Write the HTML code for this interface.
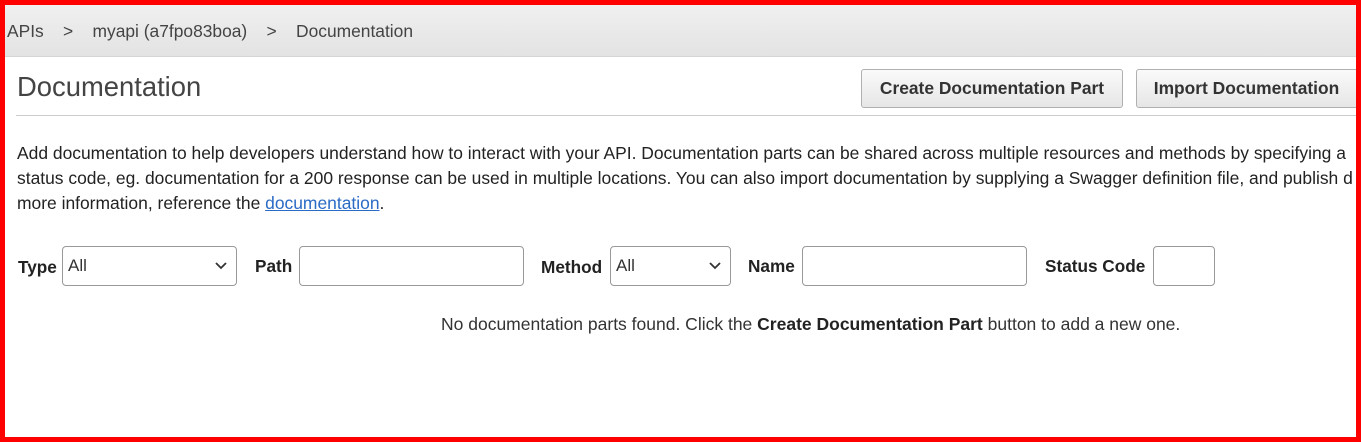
<!DOCTYPE html>
<html><head><style>
*{box-sizing:border-box;margin:0;padding:0}
body{width:1361px;height:442px;overflow:hidden;background:#fff;font-family:"Liberation Sans",Arial,sans-serif;color:#333;position:relative}
.a{position:absolute;white-space:nowrap}
.frame{position:absolute;left:0;top:0;width:1361px;height:442px;border:5px solid #f00;z-index:10;pointer-events:none}
.bc{position:absolute;left:0;top:0;width:1361px;height:57px;background:linear-gradient(#f1f1f1,#e3e3e3);border-bottom:1px solid #d5d5d5}
.btn{position:absolute;height:39px;border:1px solid #b0b0b0;border-radius:3px;background:linear-gradient(#fafafa,#e6e6e6);font-weight:bold;font-size:17.4px;color:#333;text-align:center;line-height:37px}
.box{position:absolute;height:40px;border:1px solid #999;border-radius:4px;background:#fff;font-size:17px;line-height:38px;padding-left:5px}
.lbl{position:absolute;font-weight:bold;font-size:17.2px;color:#222}
.chev{position:absolute;right:9px;top:15px}
</style></head><body>
<div class="bc"></div>
<div class="a" style="left:7px;top:21px;font-size:17.4px;color:#444">APIs&nbsp;&nbsp;&nbsp;&nbsp;&gt;&nbsp;&nbsp;&nbsp;&nbsp;myapi (a7fpo83boa)&nbsp;&nbsp;&nbsp;&nbsp;&gt;&nbsp;&nbsp;&nbsp;&nbsp;Documentation</div>
<div class="a" style="left:17px;top:71px;font-size:27.4px;color:#444">Documentation</div>
<div class="btn" style="left:861px;top:69px;width:262px">Create Documentation Part</div>
<div class="btn" style="left:1136px;top:69px;width:225px;padding-right:4px">Import Documentation</div>
<div class="a" style="left:16px;top:115px;width:1345px;height:1px;background:#ccc"></div>
<div class="a" style="left:17px;top:141px;font-size:17.45px;line-height:25px;color:#222">Add documentation to help developers understand how to interact with your API. Documentation parts can be shared across multiple resources and methods by specifying a<br>status code, eg. documentation for a 200 response can be used in multiple locations. You can also import documentation by supplying a Swagger definition file, and publish d<br>more information, reference the <span style="color:#2a6bc5;text-decoration:underline">documentation</span>.</div>
<div class="lbl" style="left:18px;top:257px">Type</div>
<div class="box" style="left:62px;top:246px;width:175px">All<svg class="chev" width="12" height="8" viewBox="0 0 12 8"><path d="M1 1l5 5 5-5" stroke="#333" stroke-width="1.8" fill="none"/></svg></div>
<div class="lbl" style="left:255px;top:256px">Path</div>
<div class="box" style="left:299px;top:246px;width:225px"></div>
<div class="lbl" style="left:541px;top:257px">Method</div>
<div class="box" style="left:610px;top:246px;width:121px">All<svg class="chev" width="12" height="8" viewBox="0 0 12 8"><path d="M1 1l5 5 5-5" stroke="#333" stroke-width="1.8" fill="none"/></svg></div>
<div class="lbl" style="left:748px;top:256px">Name</div>
<div class="box" style="left:802px;top:246px;width:225px"></div>
<div class="lbl" style="left:1045px;top:256px">Status Code</div>
<div class="box" style="left:1153px;top:246px;width:62px"></div>
<div class="a" style="left:441px;top:314px;font-size:17.5px;color:#333">No documentation parts found. Click the <b style="color:#222">Create Documentation Part</b> button to add a new one.</div>
<div class="frame"></div>
</body></html>
